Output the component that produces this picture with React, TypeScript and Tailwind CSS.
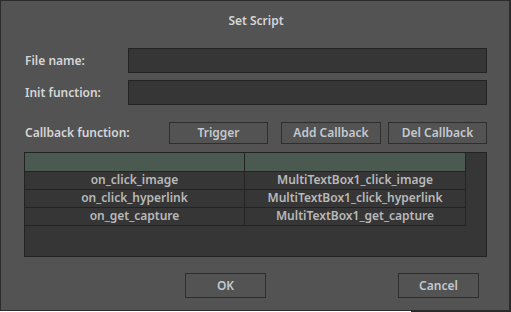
import React from "react";

const rows = [
  ["on_click_image", "MultiTextBox1_click_image"],
  ["on_click_hyperlink", "MultiTextBox1_click_hyperlink"],
  ["on_get_capture", "MultiTextBox1_get_capture"],
];

function Btn({ label, w, h }: { label: string; w: string; h: string }) {
  return (
    <div
      className={`${w} ${h} flex items-center justify-center border border-[#2e2e2e] bg-[#535353] text-[#c3c9cf] text-[12px] font-semibold`}
    >
      {label}
    </div>
  );
}

export default function App() {
  return (
    <div
      className="w-[511px] h-[312px] bg-[#2b2b2b] flex flex-col"
      style={{ fontFamily: '"Noto Sans", "Open Sans", sans-serif' }}
    >
      <div className="w-[510px] h-[311px] border border-[#2b2b2b] bg-[#535353] flex flex-col pl-[23px] pr-[22px]">
        <div className="h-[38px] pt-[11px] flex justify-center text-[12px] font-semibold text-[#d6d6d6] pl-[1px]">
          Set Script
        </div>
        <div className="flex items-center h-[25px] mt-[9px]">
          <div className="w-[104px] pl-[1px] text-[12px] font-semibold text-[#d6d6d6]">File name:</div>
          <div className="flex-1 h-[25px] bg-[#363636] border border-[#232323]" />
        </div>
        <div className="flex items-center h-[25px] mt-[7px]">
          <div className="w-[104px] pl-[1px] text-[12px] font-semibold text-[#d6d6d6]">Init function:</div>
          <div className="flex-1 h-[25px] bg-[#363636] border border-[#232323]" />
        </div>
        <div className="flex items-center h-[22px] mt-[17px]">
          <div className="w-[145px] pl-[1px] text-[12px] font-semibold text-[#d6d6d6]">Callback function:</div>
          <Btn label="Trigger" w="w-[99px]" h="h-[22px]" />
          <div className="w-[13px]" />
          <Btn label="Add Callback" w="w-[100px]" h="h-[22px]" />
          <div className="w-[7px]" />
          <Btn label="Del Callback" w="w-[99px]" h="h-[22px]" />
        </div>
        <div className="mt-[8px] w-[463px] h-[105px] border border-[#232323] bg-[#363636] flex flex-col">
          <div className="flex w-[441px]">
            <div className="w-[220px] h-[19px] bg-[#4b5a50] border-r border-b border-[#232323]" />
            <div className="w-[221px] h-[19px] bg-[#4b5a50] border-r border-b border-[#232323]" />
          </div>
          {rows.map(([a, b]) => (
            <div key={a} className="flex w-[441px] text-[12px] font-semibold text-[#b9b9b9]">
              <div className="w-[220px] h-[18px] border-r border-b border-[#232323] flex items-center justify-center leading-none pb-[1px]">
                {a}
              </div>
              <div className="w-[221px] h-[18px] border-r border-b border-[#232323] flex items-center justify-center leading-none pb-[1px]">
                {b}
              </div>
            </div>
          ))}
        </div>
        <div className="flex mt-[16px]">
          <div className="w-[161px]" />
          <Btn label="OK" w="w-[81px]" h="h-[25px]" />
          <div className="w-[132px]" />
          <Btn label="Cancel" w="w-[81px]" h="h-[25px]" />
        </div>
      </div>
      <div className="flex h-[1px]">
        <div className="w-[411px] bg-white" />
      </div>
    </div>
  );
}
